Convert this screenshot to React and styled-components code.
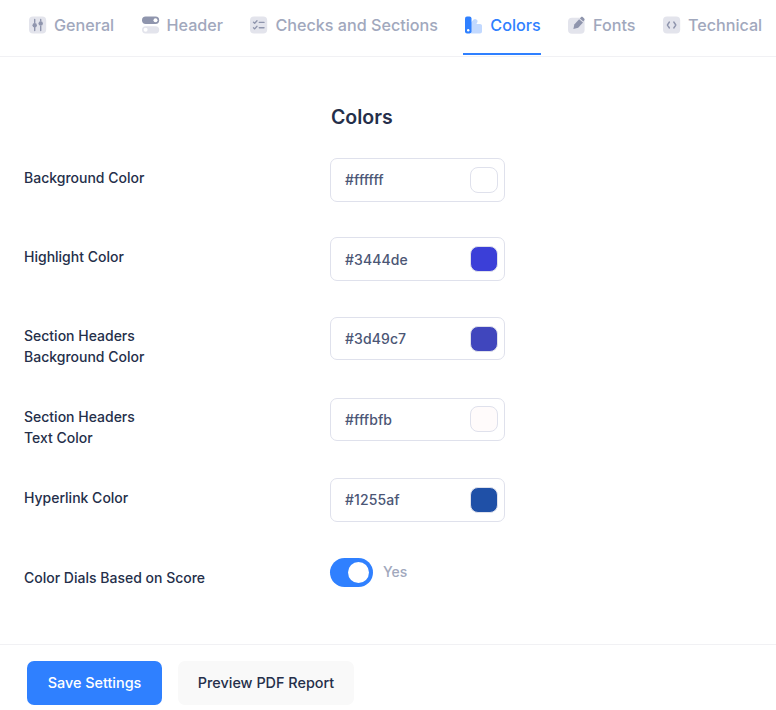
import React from "react";
import styled, { createGlobalStyle } from "styled-components";

const GlobalStyle = createGlobalStyle`
  html, body {
    margin: 0;
    padding: 0;
    background: #ffffff;
    font-family: Inter, "Liberation Sans", sans-serif;
  }
`;

const Page = styled.div`
  width: 776px;
  height: 710px;
  overflow: hidden;
  display: flex;
  flex-direction: column;
`;

const TabBar = styled.div`
  height: 56px;
  display: flex;
  align-items: stretch;
  gap: 25.4px;
  padding-left: 27px;
  border-bottom: 1px solid #f1f1f4;
  white-space: nowrap;
`;

const Tab = styled.div`
  display: flex;
  align-items: center;
  gap: 7px;
  padding: 0 0 4px 2px;
  font-size: 16.15px;
  font-weight: 500;
  color: ${(p) => (p.$active ? "#2f80ff" : "#a1a8bd")};
  border-bottom: 2px solid ${(p) => (p.$active ? "#2f80ff" : "transparent")};
  box-sizing: border-box;
  height: 55px;
`;

const Form = styled.div`
  flex: 1;
  padding: 47px 0 0 24px;
`;

const Title = styled.h2`
  margin: 0 0 27px 307px;
  font-size: 19.5px;
  line-height: 27px;
  font-weight: 600;
  color: #252f4a;
`;

const Row = styled.div`
  display: grid;
  grid-template-columns: 306px 175px;
  height: ${(p) => p.$height};
`;

const Label = styled.div`
  font-size: 14px;
  line-height: 21px;
  font-weight: 450;
  color: #252f4a;
  padding-top: 8.6px;
`;

const ColorField = styled.div`
  height: 43.6px;
  box-sizing: border-box;
  display: flex;
  align-items: center;
  justify-content: space-between;
  padding: 0 6px 0 14px;
  border: 1px solid #dfe1ec;
  border-radius: 7px;
  font-size: 14px;
  font-weight: 450;
  letter-spacing: 0.1px;
  color: #4b5675;
`;

const Swatch = styled.div`
  width: 28px;
  height: 26px;
  box-sizing: border-box;
  border: 1px solid #dfe1ec;
  border-radius: 8px;
  background: ${(p) => p.$color};
`;

const ToggleWrap = styled.div`
  display: flex;
  align-items: flex-start;
  gap: 10px;
  font-size: 14px;
  line-height: 28px;
  font-weight: 450;
  color: #a1a8bd;
`;

const Track = styled.div`
  position: relative;
  width: 43px;
  height: 29px;
  border-radius: 15px;
  background: #2f80ff;
`;

const Knob = styled.div`
  position: absolute;
  top: 4px;
  right: 4px;
  width: 21px;
  height: 21px;
  border-radius: 50%;
  background: #ffffff;
`;

const Footer = styled.div`
  flex: none;
  display: flex;
  gap: 16px;
  padding: 16px 0 5px 27px;
  border-top: 1px solid #f1f1f4;
`;

const Button = styled.button`
  height: 44px;
  width: ${(p) => p.$width};
  padding: 0 0 1px;
  border: none;
  border-radius: 7px;
  font-family: inherit;
  font-size: 14.4px;
  font-weight: 500;
  color: ${(p) => (p.$primary ? "#ffffff" : "#252f4a")};
  background: ${(p) => (p.$primary ? "#2f80ff" : "#f9f9f9")};
`;

const IconSvg = styled.svg`
  width: 18px;
  height: 18px;
  flex: none;
  display: block;
`;

const GeneralIcon = () => (
  <IconSvg viewBox="0 0 18 18">
    <rect x="0" y="0.5" width="17.2" height="17" rx="4" fill="#e3e4ec" />
    <path d="M5.7 3.5v3M5.7 11.5v3M11.7 3.5v1.5M11.7 10v4.5" stroke="#8f95ad" strokeWidth="1.4" strokeLinecap="round" />
    <circle cx="5.7" cy="9.2" r="2.2" fill="#8f95ad" />
    <circle cx="11.7" cy="7.4" r="2.2" fill="#8f95ad" />
  </IconSvg>
);

const HeaderIcon = () => (
  <IconSvg viewBox="0 0 18 18">
    <rect x="0" y="10.2" width="17.2" height="7.2" rx="3.6" fill="#e3e4ec" />
    <circle cx="3.6" cy="13.8" r="2" fill="#ffffff" />
    <rect x="0" y="0.5" width="17.2" height="7.4" rx="3.7" fill="#8f95ad" />
    <circle cx="13.5" cy="4.2" r="2" fill="#ffffff" />
  </IconSvg>
);

const ChecksIcon = () => (
  <IconSvg viewBox="0 0 18 18">
    <rect x="0" y="0.5" width="17.2" height="17" rx="4" fill="#e3e4ec" />
    <path d="M3.5 6.2l1.2 1.1 2.3-2.6M3.5 11.8l1.2 1.1 2.3-2.6" fill="none" stroke="#8f95ad" strokeWidth="1.3" strokeLinecap="round" strokeLinejoin="round" />
    <path d="M9.3 6.4h4.7M9.3 11.8h4.7" stroke="#8f95ad" strokeWidth="1.4" strokeLinecap="round" />
  </IconSvg>
);

const ColorsIcon = () => (
  <IconSvg viewBox="0 0 18 18">
    <path d="M6 6.5l2.6-3c.8-.8 2-.8 2.8 0l.6.6c.7.7.8 1.9.1 2.7L11.4 8H15c1.1 0 2 .8 2 1.8V15.4c0 1.1-.9 2-2 2H6z" fill="#c2d9ff" />
    <rect x="0" y="0.4" width="6.5" height="17" rx="2" fill="#2f80ff" />
    <circle cx="3.2" cy="14.2" r="1.2" fill="#ffffff" />
  </IconSvg>
);

const FontsIcon = () => (
  <IconSvg viewBox="0 0 18 18">
    <rect x="0" y="1.8" width="16.6" height="16" rx="4" fill="#e3e4ec" />
    <path d="M5.4 13l.9-4.4 4.8-5.4 3.9 3.4-4.8 5.2z" fill="#8f95ad" />
    <path d="M11.9 2.4l1-1.2c.5-.5 1.3-.6 1.8-.1l1.5 1.3c.5.5.6 1.3.1 1.8l-1 1.2z" fill="#8f95ad" />
  </IconSvg>
);

const TechnicalIcon = () => (
  <IconSvg viewBox="0 0 18 18">
    <rect x="0" y="0.5" width="17.2" height="17" rx="4" fill="#e3e4ec" />
    <path d="M6.4 6L4.4 9l2 3M10.8 6l2 3-2 3" fill="none" stroke="#8f95ad" strokeWidth="1.4" strokeLinecap="round" strokeLinejoin="round" />
  </IconSvg>
);

const tabs = [
  { name: "General", icon: <GeneralIcon /> },
  { name: "Header", icon: <HeaderIcon /> },
  { name: "Checks and Sections", icon: <ChecksIcon /> },
  { name: "Colors", icon: <ColorsIcon />, active: true },
  { name: "Fonts", icon: <FontsIcon /> },
  { name: "Technical", icon: <TechnicalIcon /> },
];

const colors = [
  { label: ["Background Color"], value: "#ffffff", swatch: "#ffffff", height: "79.4px" },
  { label: ["Highlight Color"], value: "#3444de", swatch: "#3b3fd8", height: "79.4px" },
  { label: ["Section Headers", "Background Color"], value: "#3d49c7", swatch: "#4046bd", height: "80.8px" },
  { label: ["Section Headers", "Text Color"], value: "#fffbfb", swatch: "#fffbfb", height: "80.4px" },
  { label: ["Hyperlink Color"], value: "#1255af", swatch: "#1f50a7", height: "80px" },
];

const App = () => {
  return (
    <Page>
      <GlobalStyle />
      <TabBar>
        {tabs.map((t) => (
          <Tab key={t.name} $active={t.active}>
            {t.icon}
            {t.name}
          </Tab>
        ))}
      </TabBar>
      <Form>
        <Title>Colors</Title>
        {colors.map((c) => (
          <Row key={c.value} $height={c.height}>
            <Label>
              {c.label.map((l) => (
                <div key={l}>{l}</div>
              ))}
            </Label>
            <div>
              <ColorField>
                {c.value}
                <Swatch $color={c.swatch} />
              </ColorField>
            </div>
          </Row>
        ))}
        <Row $height="86px">
          <Label>Color Dials Based on Score</Label>
          <ToggleWrap>
            <Track>
              <Knob />
            </Track>
            Yes
          </ToggleWrap>
        </Row>
      </Form>
      <Footer>
        <Button $primary $width="135px">Save Settings</Button>
        <Button $width="176px">Preview PDF Report</Button>
      </Footer>
    </Page>
  );
};

export default App;
